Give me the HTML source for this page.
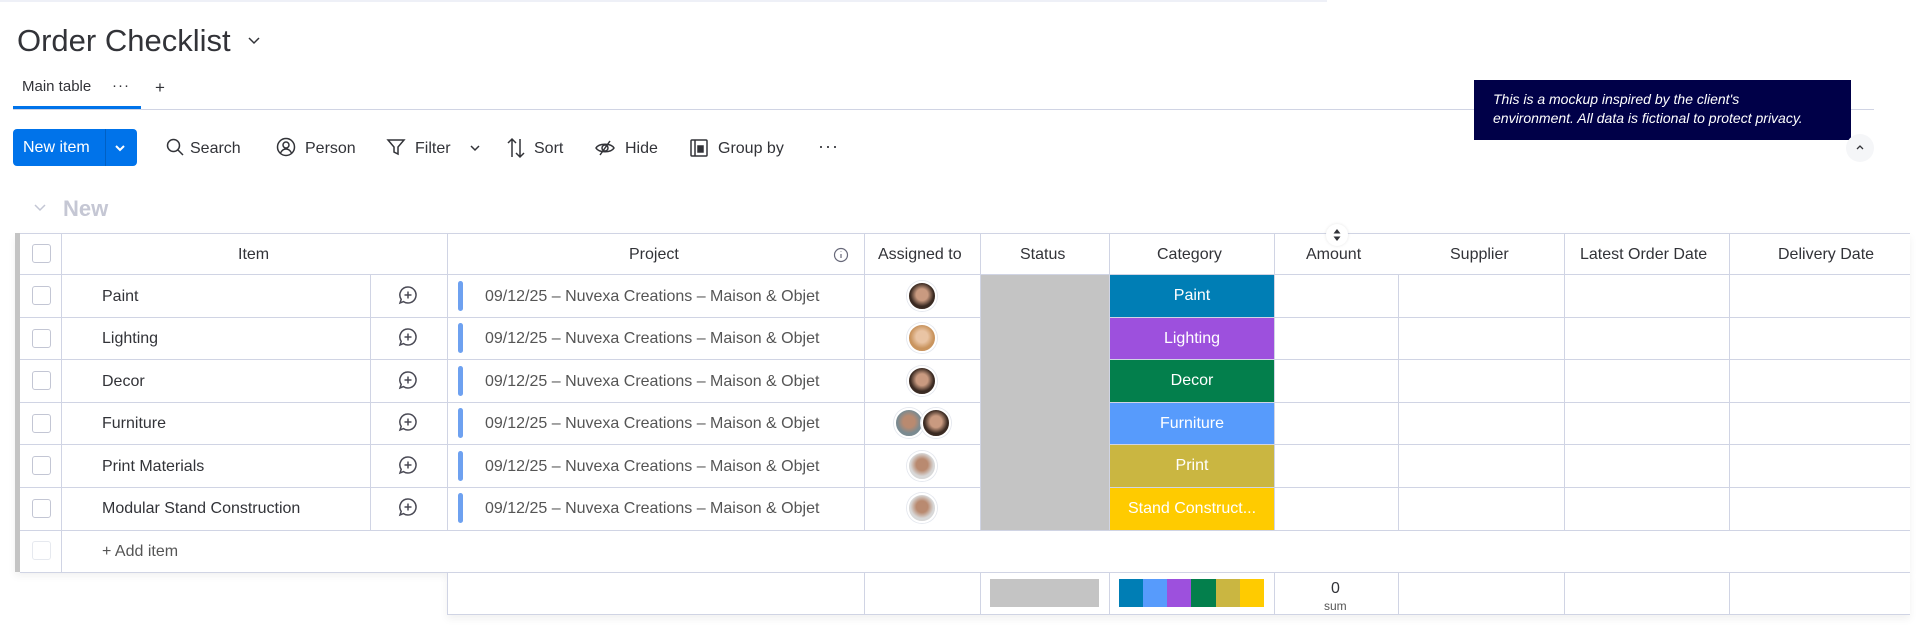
<!DOCTYPE html>
<html><head><meta charset="utf-8"><style>
*{margin:0;padding:0;box-sizing:border-box}
body{width:1920px;height:644px;background:#fff;font-family:"Liberation Sans",sans-serif;color:#323338;position:relative;overflow:hidden}
.a{position:absolute}
.t{position:absolute;white-space:nowrap;font-size:16px}
.hl{position:absolute;height:1px;background:#d0d4e4}
.vl{position:absolute;width:1px;background:#d0d4e4}
.cb{position:absolute;left:32px;width:19px;height:19px;border:1px solid #c3c6d4;border-radius:3px;background:#fff}
.cat{position:absolute;left:1110px;width:164px;color:#fff;text-align:center;font-size:16px}
.av{position:absolute;width:30px;height:30px;border-radius:50%;border:2px solid #fff;box-shadow:0 0 0 1px #e6e9ef}
.ic{position:absolute;stroke:#323338;fill:none;stroke-width:1.5}
</style></head><body>
<div class="a" style="left:0;top:0;width:1327px;height:2px;background:#eef0f7"></div>

<div class="t" style="left:17px;top:23px;font-size:31px">Order Checklist</div>
<svg class="ic" style="left:247px;top:36px" width="14" height="10" viewBox="0 0 14 10"><path d="M2 2l5 5 5-5"/></svg>

<div class="t" style="left:22px;top:78px;font-size:15px">Main table</div>
<div class="t" style="left:112px;top:77px;font-size:15px;letter-spacing:1px">···</div>
<div class="t" style="left:155px;top:78px;font-size:17px">+</div>
<div class="a" style="left:13px;top:106px;width:128px;height:3px;background:#0073ea"></div>
<div class="hl" style="left:13px;top:109px;width:1861px"></div>

<div class="a" style="left:13px;top:129px;width:124px;height:37px;background:#0073ea;border-radius:4px"></div>
<div class="a" style="left:105px;top:129px;width:1px;height:37px;background:#0060c4"></div>
<div class="t" style="left:23px;top:139px;color:#fff;font-size:16px">New item</div>
<svg class="ic" style="left:114px;top:143px;stroke:#fff;stroke-width:2" width="12" height="10" viewBox="0 0 12 10"><path d="M2 3l4 4 4-4"/></svg>

<svg class="ic" style="left:165px;top:137px" width="20" height="20" viewBox="0 0 20 20"><circle cx="8.5" cy="8.5" r="6"/><path d="M13 13l5 5"/></svg>
<div class="t" style="left:190px;top:140px">Search</div>
<svg class="ic" style="left:276px;top:137px" width="20" height="20" viewBox="0 0 20 20"><circle cx="10" cy="10" r="8.5"/><circle cx="10" cy="8" r="3"/><path d="M4.5 16c1.5-3 3.5-4 5.5-4s4 1 5.5 4"/></svg>
<div class="t" style="left:305px;top:140px">Person</div>
<svg class="ic" style="left:386px;top:137px" width="20" height="20" viewBox="0 0 20 20"><path d="M2 3h16l-6 7v7l-4-2v-5z"/></svg>
<div class="t" style="left:415px;top:140px">Filter</div>
<svg class="ic" style="left:469px;top:144px" width="12" height="8" viewBox="0 0 12 8"><path d="M2 2l4 4 4-4"/></svg>
<svg class="ic" style="left:506px;top:137px" width="20" height="22" viewBox="0 0 20 22"><path d="M6 20V2M2 6l4-4 4 4M14 2v18M10 16l4 4 4-4"/></svg>
<div class="t" style="left:534px;top:140px">Sort</div>
<svg class="ic" style="left:595px;top:138px" width="20" height="20" viewBox="0 0 20 20"><path d="M1 10c3-5 15-5 18 0c-3 5-15 5-18 0z"/><circle cx="10" cy="10" r="3"/><path d="M15 3L5 17"/></svg>
<div class="t" style="left:625px;top:140px">Hide</div>
<svg class="ic" style="left:689px;top:138px" width="20" height="20" viewBox="0 0 20 20"><rect x="2" y="2" width="16" height="16" rx="1"/><path d="M6 2v16"/><rect x="9" y="8" width="5" height="6" fill="#323338"/></svg>
<div class="t" style="left:718px;top:140px">Group by</div>
<div class="t" style="left:818px;top:136px;font-size:18px;letter-spacing:1px">···</div>

<div class="a" style="left:1474px;top:80px;width:377px;height:60px;background:#000048"></div>
<div class="t" style="left:1493px;top:90px;color:#fff;font-size:14px;font-style:italic;line-height:19px">This is a mockup inspired by the client's<br>environment. All data is fictional to protect privacy.</div>
<div class="a" style="left:1846px;top:134px;width:28px;height:28px;border-radius:50%;background:#f5f6f8"></div>
<svg class="ic" style="left:1854px;top:143px;stroke-width:1.3" width="12" height="8" viewBox="0 0 12 8"><path d="M3 6l3-3 3 3"/></svg>

<svg class="ic" style="left:33px;top:203px;stroke:#c3c6d4" width="14" height="10" viewBox="0 0 14 10"><path d="M2 2l5 5 5-5"/></svg>
<div class="t" style="left:63px;top:196px;font-size:22px;font-weight:bold;color:#c5c7d4">New</div>

<!-- table -->
<div class="a" style="left:15px;top:233px;width:1895px;height:339px;box-shadow:0 4px 8px rgba(0,0,0,0.06)"></div>
<div class="a" style="left:15px;top:233px;width:5px;height:339px;background:#c4c4c4"></div>
<div class="a" style="left:447px;top:572px;width:1463px;height:43px;border-left:1px solid #d0d4e4;border-bottom:1px solid #d0d4e4;box-shadow:0 4px 8px rgba(0,0,0,0.06);background:#fff"></div>

<div class="hl" style="left:20px;top:233px;width:1890px"></div>
<div class="hl" style="left:20px;top:274px;width:1890px"></div>
<div class="hl" style="left:20px;top:317px;width:1890px"></div>
<div class="hl" style="left:20px;top:359px;width:1890px"></div>
<div class="hl" style="left:20px;top:402px;width:1890px"></div>
<div class="hl" style="left:20px;top:444px;width:1890px"></div>
<div class="hl" style="left:20px;top:487px;width:1890px"></div>
<div class="hl" style="left:20px;top:530px;width:1890px"></div>
<div class="hl" style="left:20px;top:572px;width:1890px"></div>

<div class="vl" style="left:61px;top:233px;height:339px"></div>
<div class="vl" style="left:370px;top:274px;height:256px"></div>
<div class="vl" style="left:447px;top:233px;height:297px"></div>
<div class="vl" style="left:864px;top:233px;height:297px"></div>
<div class="vl" style="left:980px;top:233px;height:297px"></div>
<div class="vl" style="left:1109px;top:233px;height:297px"></div>
<div class="vl" style="left:1274px;top:233px;height:297px"></div>
<div class="vl" style="left:1398px;top:274px;height:256px"></div>
<div class="vl" style="left:1564px;top:233px;height:297px"></div>
<div class="vl" style="left:1729px;top:233px;height:297px"></div>
<div class="vl" style="left:864px;top:572px;height:43px"></div>
<div class="vl" style="left:980px;top:572px;height:43px"></div>
<div class="vl" style="left:1109px;top:572px;height:43px"></div>
<div class="vl" style="left:1274px;top:572px;height:43px"></div>
<div class="vl" style="left:1398px;top:572px;height:43px"></div>
<div class="vl" style="left:1564px;top:572px;height:43px"></div>
<div class="vl" style="left:1729px;top:572px;height:43px"></div>

<!-- header -->
<div class="cb" style="top:244px"></div>
<div class="t" style="left:238px;top:246px">Item</div>
<div class="t" style="left:629px;top:246px">Project</div>
<svg class="ic" style="left:833px;top:247px;stroke:#676879;stroke-width:1.2" width="16" height="16" viewBox="0 0 16 16"><circle cx="8" cy="8" r="6.5"/><path d="M8 7v4M8 4.5v.5"/></svg>
<div class="t" style="left:878px;top:246px">Assigned to</div>
<div class="t" style="left:1020px;top:246px">Status</div>
<div class="t" style="left:1157px;top:246px">Category</div>
<div class="t" style="left:1306px;top:246px">Amount</div>
<div class="t" style="left:1450px;top:246px">Supplier</div>
<div class="t" style="left:1580px;top:246px">Latest Order Date</div>
<div class="t" style="left:1778px;top:246px">Delivery Date</div>
<div class="a" style="left:1326px;top:224px;width:22px;height:22px;border-radius:50%;background:#fff;box-shadow:0 0 3px rgba(0,0,0,0.1)"></div>
<svg class="a" style="left:1332px;top:228px" width="10" height="14" viewBox="0 0 10 14"><path d="M5 1l3.5 4.5h-7zM5 13l3.5-4.5h-7z" fill="#323338"/></svg>

<!-- rows -->
<div class="cb" style="top:286px"></div><div class="cb" style="top:329px"></div><div class="cb" style="top:371px"></div><div class="cb" style="top:414px"></div><div class="cb" style="top:456px"></div><div class="cb" style="top:499px"></div><div class="cb" style="top:541px;border-color:#e6e9ef"></div>

<div class="t" style="left:102px;top:288px">Paint</div>
<div class="t" style="left:102px;top:330px">Lighting</div>
<div class="t" style="left:102px;top:373px">Decor</div>
<div class="t" style="left:102px;top:415px">Furniture</div>
<div class="t" style="left:102px;top:458px">Print Materials</div>
<div class="t" style="left:102px;top:500px">Modular Stand Construction</div>
<div class="t" style="left:102px;top:543px;color:#555">+ Add item</div>

<svg width="0" height="0" style="position:absolute"><defs><g id="cm"><path d="M10 2a8 8 0 1 1-4.5 14.6L2 18l1.2-3.6A8 8 0 0 1 10 2z" fill="none" stroke="#4a4a55" stroke-width="1.5"/><path d="M10 6.5v7M6.5 10h7" stroke="#4a4a55" stroke-width="1.5"/></g></defs></svg>
<svg class="a" style="left:398px;top:285px" width="21" height="21"><use href="#cm"/></svg>
<svg class="a" style="left:398px;top:327px" width="21" height="21"><use href="#cm"/></svg>
<svg class="a" style="left:398px;top:370px" width="21" height="21"><use href="#cm"/></svg>
<svg class="a" style="left:398px;top:412px" width="21" height="21"><use href="#cm"/></svg>
<svg class="a" style="left:398px;top:455px" width="21" height="21"><use href="#cm"/></svg>
<svg class="a" style="left:398px;top:497px" width="21" height="21"><use href="#cm"/></svg>

<div class="a" style="left:458px;top:281px;width:5px;height:30px;background:#6ea1f0;border-radius:3px"></div>
<div class="a" style="left:458px;top:323px;width:5px;height:30px;background:#6ea1f0;border-radius:3px"></div>
<div class="a" style="left:458px;top:366px;width:5px;height:30px;background:#6ea1f0;border-radius:3px"></div>
<div class="a" style="left:458px;top:408px;width:5px;height:30px;background:#6ea1f0;border-radius:3px"></div>
<div class="a" style="left:458px;top:451px;width:5px;height:30px;background:#6ea1f0;border-radius:3px"></div>
<div class="a" style="left:458px;top:493px;width:5px;height:30px;background:#6ea1f0;border-radius:3px"></div>
<div class="t" style="left:485px;top:288px;color:#555">09/12/25 – Nuvexa Creations – Maison &amp; Objet</div>
<div class="t" style="left:485px;top:330px;color:#555">09/12/25 – Nuvexa Creations – Maison &amp; Objet</div>
<div class="t" style="left:485px;top:373px;color:#555">09/12/25 – Nuvexa Creations – Maison &amp; Objet</div>
<div class="t" style="left:485px;top:415px;color:#555">09/12/25 – Nuvexa Creations – Maison &amp; Objet</div>
<div class="t" style="left:485px;top:458px;color:#555">09/12/25 – Nuvexa Creations – Maison &amp; Objet</div>
<div class="t" style="left:485px;top:500px;color:#555">09/12/25 – Nuvexa Creations – Maison &amp; Objet</div>

<div class="av" style="left:907px;top:281px;background:radial-gradient(circle at 50% 45%,#c99a80 30%,#3a2a22 60%)"></div>
<div class="av" style="left:907px;top:323px;background:radial-gradient(circle at 50% 45%,#e9c4a4 30%,#c9945e 60%)"></div>
<div class="av" style="left:907px;top:366px;background:radial-gradient(circle at 50% 45%,#c99a80 30%,#3a2a22 60%)"></div>
<div class="av" style="left:894px;top:408px;background:radial-gradient(circle at 50% 45%,#b98a70 30%,#7a8a90 60%)"></div>
<div class="av" style="left:921px;top:408px;background:radial-gradient(circle at 50% 45%,#c99a80 30%,#3a2a22 60%)"></div>
<div class="av" style="left:907px;top:451px;background:radial-gradient(circle at 50% 45%,#b98a70 30%,#d8d8d8 60%)"></div>
<div class="av" style="left:907px;top:493px;background:radial-gradient(circle at 50% 45%,#b98a70 30%,#d8d8d8 60%)"></div>

<div class="a" style="left:981px;top:275px;width:128px;height:255px;background:#c4c4c4"></div>
<div class="cat" style="top:275px;height:42px;line-height:42px;background:#007eb5">Paint</div>
<div class="cat" style="top:318px;height:41px;line-height:41px;background:#9d50dd">Lighting</div>
<div class="cat" style="top:360px;height:42px;line-height:42px;background:#037f4c">Decor</div>
<div class="cat" style="top:403px;height:41px;line-height:41px;background:#579bfc">Furniture</div>
<div class="cat" style="top:445px;height:42px;line-height:42px;background:#cab641">Print</div>
<div class="cat" style="top:488px;height:42px;line-height:42px;background:#ffcb00">Stand Construct...</div>

<!-- footer -->
<div class="a" style="left:990px;top:579px;width:109px;height:28px;background:#c4c4c4"></div>
<div class="a" style="left:1119px;top:579px;width:24px;height:28px;background:#007eb5"></div>
<div class="a" style="left:1143px;top:579px;width:24px;height:28px;background:#579bfc"></div>
<div class="a" style="left:1167px;top:579px;width:24px;height:28px;background:#9d50dd"></div>
<div class="a" style="left:1191px;top:579px;width:25px;height:28px;background:#037f4c"></div>
<div class="a" style="left:1216px;top:579px;width:24px;height:28px;background:#cab641"></div>
<div class="a" style="left:1240px;top:579px;width:24px;height:28px;background:#ffcb00"></div>
<div class="t" style="left:1331px;top:580px;font-size:16px">0</div>
<div class="t" style="left:1324px;top:599px;font-size:12px;color:#555">sum</div>
</body></html>
